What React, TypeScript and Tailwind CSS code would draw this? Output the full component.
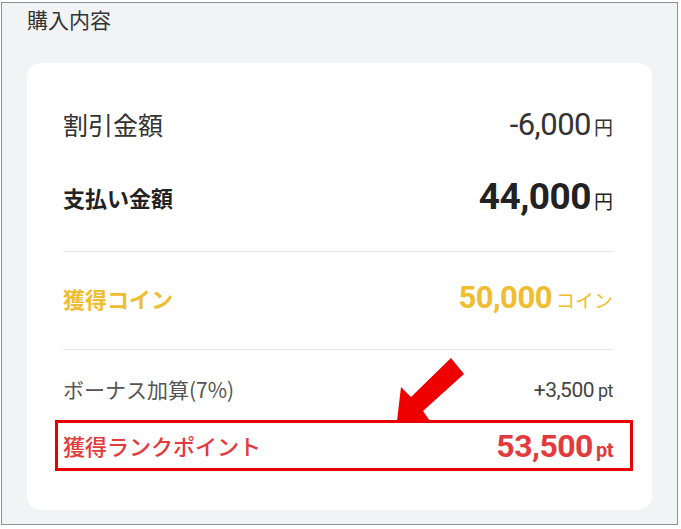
const jp = { fontFamily: '"Noto Sans CJK JP", "Noto Sans", sans-serif' };

function Num({ children, className }: { children: React.ReactNode; className: string }) {
  return <span className={`font-['Roboto',sans-serif] leading-none tracking-[-0.5px] ${className}`}>{children}</span>;
}

function Arrow() {
  return (
    <svg className="absolute left-0 top-0 pointer-events-none" width="681" height="529" viewBox="0 0 681 529">
      <polygon
        points="397,421 401,387 411,397 451,358 464,374 423,411 430,421"
        fill="#ee0000"
      />
    </svg>
  );
}

export default function App() {
  return (
    <div className="relative w-[681px] h-[529px] bg-white" style={jp}>
      <div className="absolute left-[1px] top-[2px] w-[677px] h-[523px] border border-[#8d9199] bg-[#f2f3f5]">
        <div className="pl-[25px] pt-[2px] h-[60px] text-[21px] leading-[28px] text-[#333]">購入内容</div>
        <div className="ml-[25px] w-[625px] h-[447px] rounded-[14px] bg-white pl-[36px] pr-[39px] pt-[30px]">
          <div className="flex h-[64px] items-center justify-between text-[#333]">
            <span className="text-[25px]">割引金額</span>
            <span className="flex items-baseline gap-[3px]">
              <Num className="text-[31px] font-normal">-6,000</Num>
              <span className="text-[19px]">円</span>
            </span>
          </div>
          <div className="flex h-[80px] items-center justify-between text-[#222]">
            <span className="text-[22px] font-bold">支払い金額</span>
            <span className="flex items-baseline gap-[3px]">
              <Num className="text-[37px] font-bold">44,000</Num>
              <span className="text-[19px]">円</span>
            </span>
          </div>
          <div className="mt-[14px] h-px bg-[#e6e7ea]" />
          <div className="flex h-[92px] items-center justify-between text-[#efbd2f]">
            <span className="text-[22px] font-bold">獲得コイン</span>
            <span className="flex items-baseline gap-[4px]">
              <Num className="text-[31px] font-bold">50,000</Num>
              <span className="text-[19px]">コイン</span>
            </span>
          </div>
          <div className="mt-[5px] h-px bg-[#e6e7ea]" />
          <div className="flex h-[70px] items-center justify-between pt-[10px] text-[#555]">
            <span className="text-[21px]">ボーナス加算(7%)</span>
            <span className="flex items-baseline gap-[4px] text-[#444]">
              <Num className="text-[21px]">+3,500</Num>
              <Num className="text-[18px]">pt</Num>
            </span>
          </div>
          <div className="-ml-[8px] -mr-[20px] flex h-[51px] items-center justify-between border-[3px] border-[#e60000] pl-[5px] pr-[17px] text-[#e23a3d]">
            <span className="text-[22px] font-medium">獲得ランクポイント</span>
            <span className="flex items-baseline gap-[3px]">
              <Num className="text-[32px] font-bold">53,500</Num>
              <Num className="text-[20px] font-bold">pt</Num>
            </span>
          </div>
        </div>
      </div>
      <Arrow />
    </div>
  );
}
